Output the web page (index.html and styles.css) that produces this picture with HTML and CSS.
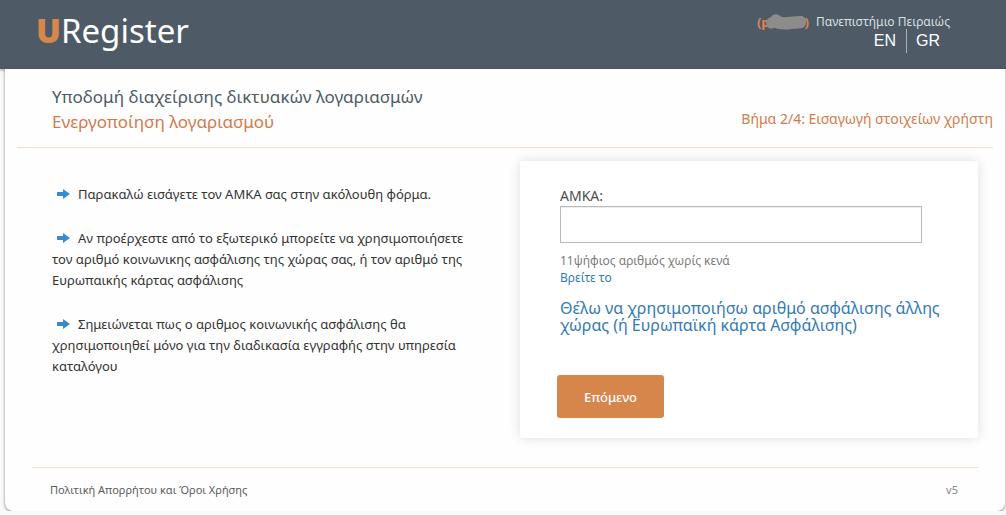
FILE: index.html
```html
<!DOCTYPE html>
<html lang="el">
<head>
<meta charset="utf-8">
<meta name="viewport" content="width=device-width, initial-scale=1">
<title>URegister</title>
<link rel="stylesheet" href="styles.css">
</head>
<body>
<header class="topbar">
  <a class="logo" href="#"><span class="logo-u">U</span><span>Register</span></a>
  <div class="account">
    <div class="institution">
      <span class="user">(p<svg class="smudge" viewBox="0 0 44 17" aria-hidden="true"><path d="M2 12C0 9 2 4 6 3C8-1 14-1 16 2C21 4 25 2 33 2C40 1 43 3 43 8C43 15 38 15 29 15C20 17 13 15 9 14C7 16 3 15 2 12Z" fill="#8d8c8b"/></svg>)</span>
      <span>Πανεπιστήμιο Πειραιώς</span>
    </div>
    <nav class="languages" aria-label="Γλώσσα">
      <a href="#">EN</a>
      <a href="#">GR</a>
    </nav>
  </div>
</header>
<main class="panel">
  <div class="heading">
    <div>
      <h1 class="title">Υποδομή διαχείρισης δικτυακών λογαριασμών</h1>
      <h2 class="subtitle">Ενεργοποίηση λογαριασμού</h2>
    </div>
    <p class="step">Βήμα 2/4: Εισαγωγή στοιχείων χρήστη</p>
  </div>
  <div class="content">
    <section class="notes">
      <p><svg class="arrow" viewBox="0 0 13 10" aria-hidden="true"><path d="M0 3H6V0L13 5L6 10V7H0Z"/></svg>Παρακαλώ εισάγετε τον ΑΜΚΑ σας στην ακόλουθη φόρμα.</p>
      <p><svg class="arrow" viewBox="0 0 13 10" aria-hidden="true"><path d="M0 3H6V0L13 5L6 10V7H0Z"/></svg>Αν προέρχεστε από το εξωτερικό μπορείτε να χρησιμοποιήσετε<br>τον αριθμό κοινωνικης ασφάλισης της χώρας σας, ή τον αριθμό της<br>Ευρωπαικής κάρτας ασφάλισης</p>
      <p><svg class="arrow" viewBox="0 0 13 10" aria-hidden="true"><path d="M0 3H6V0L13 5L6 10V7H0Z"/></svg>Σημειώνεται πως ο αριθμος κοινωνικής ασφάλισης θα<br>χρησιμοποιηθεί μόνο για την διαδικασία εγγραφής στην υπηρεσία<br>καταλόγου</p>
    </section>
    <form class="card">
      <label class="label" for="amka">ΑΜΚΑ:</label>
      <input class="field" id="amka" type="text" aria-describedby="amka-hint">
      <p class="hint" id="amka-hint">11ψήφιος αριθμός χωρίς κενά</p>
      <a class="find" href="#">Βρείτε το</a>
      <a class="alternative" href="#">Θέλω να χρησιμοποιήσω αριθμό ασφάλισης άλλης<br>χώρας (ή Ευρωπαϊκή κάρτα Ασφάλισης)</a>
      <button class="next" type="button">Επόμενο</button>
    </form>
  </div>
  <footer class="footer">
    <a href="#">Πολιτική Απορρήτου και Όροι Χρήσης</a>
    <span class="version">v5</span>
  </footer>
</main>
</body>
</html>
```
FILE: styles.css
```css
* { box-sizing: border-box; }
body {
  margin: 0;
  background: #f9f9f9;
  color: #333;
  font: 13px/21px "Noto Sans", sans-serif;
}
h1, h2, p { margin: 0; font-weight: 400; }
a { color: #337ab7; text-decoration: none; }

.topbar {
  position: relative;
  display: flex;
  justify-content: space-between;
  height: 69px;
  padding: 0 56px 0 36px;
  background: #4e5b66;
  box-shadow: 0 1px 3px rgba(0, 0, 0, .4);
}
.logo {
  display: flex;
  padding-top: 8px;
  color: #fff;
  font-size: 33px;
  line-height: 46px;
}
.logo-u { color: #d8864b; font-weight: 900; }
.account { padding-top: 12px; }
.institution { display: flex; gap: 7px; color: #dcdfe1; font-size: 12px; line-height: 20px; }
.user { display: flex; align-items: center; color: #e28249; font-size: 13px; font-weight: 700; }
.smudge { width: 42px; height: 17px; margin: 0 -2px 0 -5px; }
.languages {
  display: flex;
  justify-content: flex-end;
  padding-right: 10px;
  margin-top: -3px;
  font: 16px/24px "Liberation Sans", Arial, sans-serif;
}
.languages a { color: #fff; }
.languages a + a { margin-left: 10px; padding-left: 9px; border-left: 1px solid #a9afb4; }

.panel {
  position: relative;
  margin: 0 1px 0 5px;
  padding: 0 12px;
  background: #fefefe;
  border-radius: 0 0 8px 8px;
  box-shadow: 0 1px 3px rgba(0, 0, 0, .5);
}
.heading {
  display: flex;
  justify-content: space-between;
  align-items: flex-end;
  padding: 15px 0 13px 35px;
  border-bottom: 1px solid #efdfd0;
}
.title, .subtitle { font-size: 17px; line-height: 25px; }
.title { color: #4e5b66; }
.subtitle, .step { color: #d27b4c; }
.step { font-size: 14px; line-height: 30px; }
.content {
  display: grid;
  grid-template-columns: 1fr 458px;
  padding: 13px 15px 0 35px;
}
.notes { display: grid; gap: 23px; align-content: start; padding-top: 23px; }
.arrow { width: 13px; height: 10px; margin: 0 8px 0 5px; fill: #398bcf; }
.card {
  display: flex;
  flex-direction: column;
  align-items: flex-start;
  padding: 24px 40px 20px;
  border-radius: 2px;
  background: #fff;
  box-shadow: 0 0 12px rgba(0, 0, 0, .13);
}
.label { color: #4c4c4c; font-size: 14px; line-height: 21px; }
.field {
  width: 362px;
  max-width: 100%;
  height: 37px;
  padding: 6px 12px;
  border: 1px solid #bbb;
  background: #fff;
  box-shadow: inset 0 1px 1px rgba(0, 0, 0, .08);
  font: inherit;
}
.hint, .find { font-size: 12px; line-height: 17px; }
.hint { margin-top: 9px; color: #7b7b7b; }
.alternative { margin-top: 14px; font-size: 16px; line-height: 17px; white-space: nowrap; }
.next {
  height: 43px;
  margin: 41px 0 0 -3px;
  padding: 0 27px;
  border: 0;
  border-radius: 3px;
  background: #d6864b;
  color: #fff;
  font: 500 13px/20px "Noto Sans", sans-serif;
}
.footer {
  display: flex;
  justify-content: space-between;
  margin: 29px 15px 0;
  padding: 11px 20px 11px 18px;
  border-top: 1px solid #efdfd0;
  font-size: 11px;
}
.footer a { color: #5c5c5c; }
.version { color: #888; }
```
